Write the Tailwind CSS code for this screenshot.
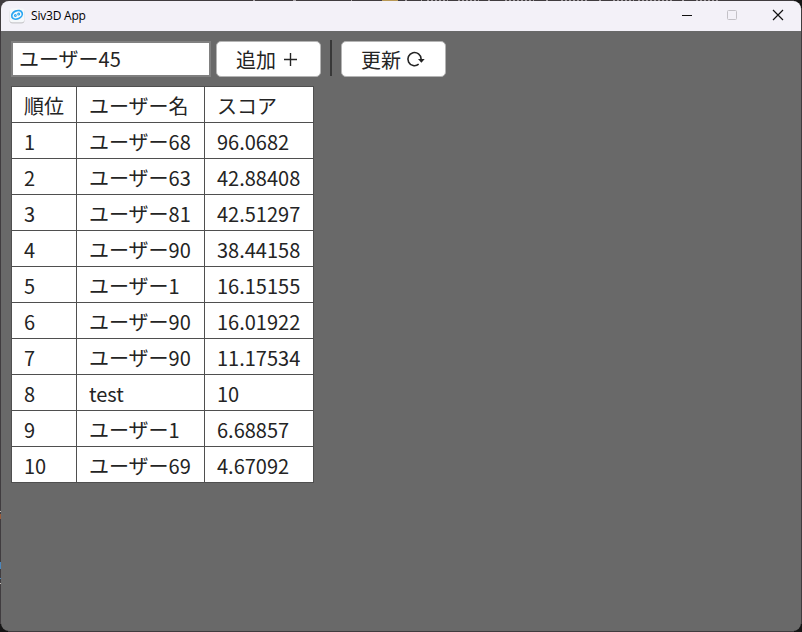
<!DOCTYPE html>
<html lang="ja">
<head>
<meta charset="utf-8">
<title>Siv3D App</title>
<script src="https://cdn.jsdelivr.net/npm/@tailwindcss/browser@4"></script>
</head>
<body class="w-[802px] h-[632px] overflow-hidden bg-[#403c3f] p-px relative font-['Noto_Sans_CJK_JP',sans-serif] text-[20px] text-[#242424]">
<svg class="absolute left-0 top-0" width="802" height="632" shape-rendering="crispEdges">
  <path d="M0 624h8v8H0zM794 624h8v8h-8zM794 0h8v8h-8z" fill="#151515"/>
  <path d="M253 .5h2M293 .5h3M351 .5h1M405 .5h2M421 .5h1M488 .5h2M546 .5h2M599 .5h2M682 .5h2" stroke="#aaa5a9"/>
  <path d="M427 .5h21M458 .5h21M505 .5h29M561 .5h28M613 .5h21M638 .5h34M696 .5h22" stroke="#a29da1" stroke-dasharray="2 2"/>
  <path d="M382 .5h16" stroke="#b99955"/>
  <path d="M0 511.500h1M0 583.500h1" stroke="#c5beb8"/>
  <path d="M0 514h1v5H0z" fill="#9a5c3b"/>
  <path d="M0 562h1v7H0zM0 578h1v1H0z" fill="#4c87bc"/>
</svg>
<div class="relative flex h-[630px] w-[800px] flex-col overflow-hidden rounded-lg bg-[#696969]">
  <header class="flex h-[30px] shrink-0 items-center bg-[#f3f1f8] text-black">
    <svg class="ml-2 shrink-0" width="16" height="16" viewBox="0 0 16 16">
      <rect x=".5" y="1" width="15" height="14.500" rx="3" fill="#c9c9cc"/>
      <rect x=".5" y=".3" width="15" height="14" rx="3" fill="#f6f8fa"/>
      <g transform="rotate(-24 8 6.800)" fill="none" stroke="#2ba6f2">
        <ellipse cx="8" cy="6.800" rx="5.500" ry="4" stroke-width="1.700"/>
        <circle cx="6.200" cy="6.800" r=".9" stroke-width="1.100"/>
        <circle cx="9.800" cy="6.800" r=".9" stroke-width="1.100"/>
      </g>
    </svg>
    <span class="ml-1.5 grow whitespace-nowrap font-['Open_Sans',sans-serif] text-[12px] leading-4 tracking-[-0.2px]">Siv3D App</span>
    <svg class="shrink-0" width="138" height="30" viewBox="663 1 138 30" fill="none">
      <path d="M682 15.500h10" stroke="#111"/>
      <rect x="727.500" y="10.500" width="9" height="9" rx="1" stroke="#c3c1c7"/>
      <path d="M773 10l10 10M783 10l-10 10" stroke="#111" stroke-width="1.200"/>
    </svg>
  </header>
  <main class="flex flex-col items-start pl-2.5 pt-2.5">
    <div class="flex h-9 items-start">
      <div class="h-9 w-[200px] border-2 border-[#808080] bg-white pl-[6px] leading-[31px]">ユーザー45</div>
      <button class="ml-[5px] flex h-9 w-[105px] items-center rounded-[5px] border border-[#b4b4b4] bg-white pl-[19px]"><span class="pt-[2px] leading-[32px]">追加</span>
        <svg class="ml-2 mt-px" width="13" height="13" viewBox="0 0 13 13"><path d="M6.500 0v13M0 6.500h13" stroke="#242424" stroke-width="1.400"/></svg>
      </button>
      <div class="-mt-px ml-[9px] h-9 w-[2px] bg-[#383838]"></div>
      <button class="ml-[9px] flex h-9 w-[105px] items-center rounded-[5px] border border-[#b4b4b4] bg-white pl-[19px]"><span class="pt-[2px] leading-[32px]">更新</span>
        <svg class="ml-[5px]" width="20" height="18" viewBox="0 0 20 18"><path d="M12.700 14.200A6.600 6.600 0 1 1 15.100 9" fill="none" stroke="#242424" stroke-width="1.600"/><path d="M12 8.900h6.700l-3.300 3.800z" fill="#242424"/></svg>
      </button>
    </div>
    <div class="mt-[9px] grid grid-cols-[65px_128px_109px] auto-rows-[36px] border-l border-t border-[#4f4f4f] bg-white *:border-b *:border-r *:border-[#4f4f4f] *:pl-3 *:whitespace-nowrap *:leading-[38px]">
      <div>順位</div><div>ユーザー名</div><div>スコア</div>
      <div>1</div><div>ユーザー68</div><div>96.0682</div>
      <div>2</div><div>ユーザー63</div><div>42.88408</div>
      <div>3</div><div>ユーザー81</div><div>42.51297</div>
      <div>4</div><div>ユーザー90</div><div>38.44158</div>
      <div>5</div><div>ユーザー1</div><div>16.15155</div>
      <div>6</div><div>ユーザー90</div><div>16.01922</div>
      <div>7</div><div>ユーザー90</div><div>11.17534</div>
      <div>8</div><div>test</div><div>10</div>
      <div>9</div><div>ユーザー1</div><div>6.68857</div>
      <div>10</div><div>ユーザー69</div><div>4.67092</div>
    </div>
  </main>
</div>
</body>
</html>
